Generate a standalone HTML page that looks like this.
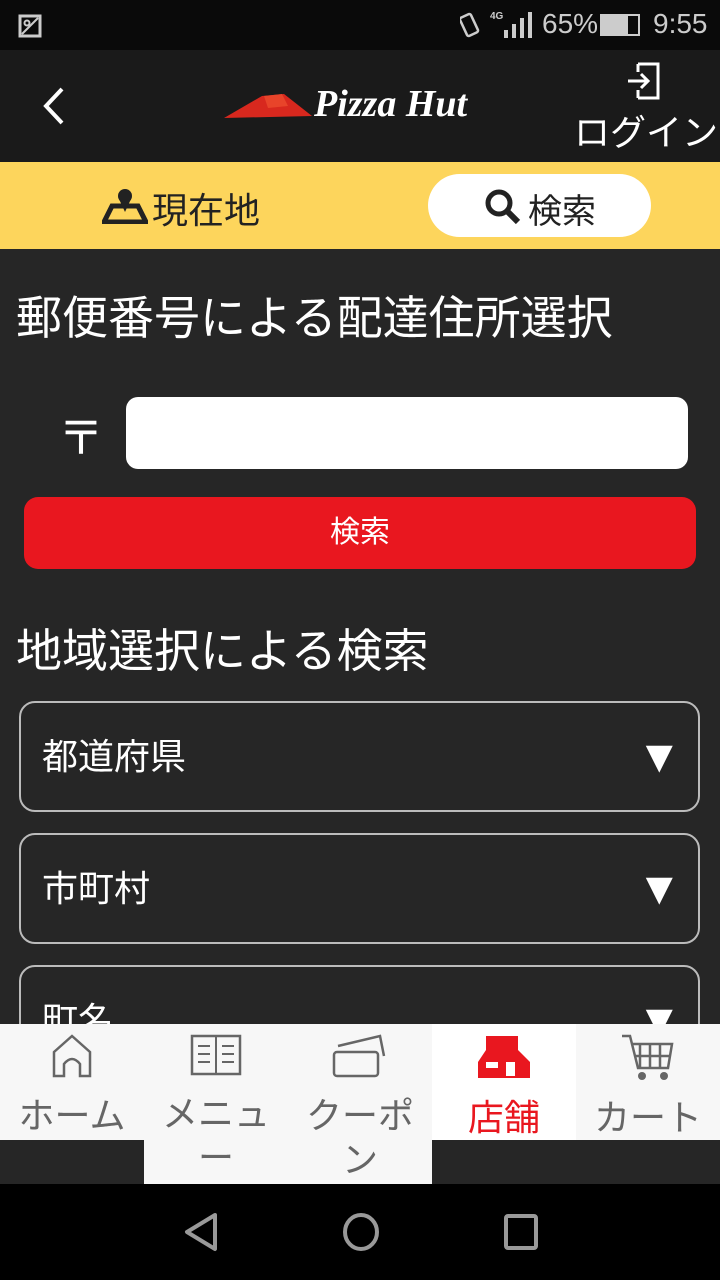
<!DOCTYPE html>
<html><head><meta charset="utf-8"><style>
*{margin:0;padding:0;box-sizing:border-box}
body{width:720px;height:1280px;background:#262626;position:relative;overflow:hidden;font-family:"Liberation Sans","Noto Sans CJK JP",sans-serif;color:#fff}
.abs{position:absolute}
.sel{position:absolute;left:19px;width:681px;height:111px;border:2px solid #bbb;border-radius:16px;font-size:36px;padding-left:21px;line-height:107px}
.sel span{position:absolute;right:16px;top:0;font-size:46px}
.tab{position:absolute;top:1024px;width:144px;padding:0 16px;background:#f7f7f7;color:#666;text-align:center;font-size:36px;line-height:44px;word-break:break-all}
.tab svg{display:block;margin:10px auto 16px}
</style></head><body>
<div class="abs" style="top:0;left:0;width:720px;height:50px;background:#0a0a0a"></div>
<svg class="abs" style="left:18px;top:14px" width="24" height="24"><rect x="2" y="2" width="20" height="20" fill="none" stroke="#ccc" stroke-width="3"/><path d="M4 20L20 4" stroke="#ccc" stroke-width="2"/><circle cx="9" cy="9" r="2.5" fill="none" stroke="#ccc" stroke-width="2"/></svg>
<svg class="abs" style="left:460px;top:10px" width="80" height="30"><rect x="3" y="5" width="12" height="20" rx="2" transform="rotate(-25 9 15)" fill="none" stroke="#ccc" stroke-width="2.5"/><text x="30" y="9" font-size="10" fill="#ccc" font-family="Liberation Sans" font-weight="bold">4G</text><rect x="44" y="20" width="4" height="8" fill="#ccc"/><rect x="52" y="14" width="4" height="14" fill="#ccc"/><rect x="60" y="8" width="4" height="20" fill="#ccc"/><rect x="68" y="2" width="4" height="26" fill="#ccc"/></svg>
<div class="abs" style="left:542px;top:8px;font-size:28px;color:#ccc">65%</div>
<div class="abs" style="left:600px;top:14px;width:40px;height:22px;border:2px solid #ccc"><div style="width:26px;height:100%;background:#ccc"></div></div>
<div class="abs" style="left:653px;top:8px;font-size:28px;color:#ccc">9:55</div>
<div class="abs" style="top:50px;left:0;width:720px;height:112px;background:#1a1a1a"></div>
<svg class="abs" style="left:40px;top:86px" width="30" height="40"><path d="M22 3L6 20L22 37" fill="none" stroke="#fff" stroke-width="4"/></svg>
<svg class="abs" style="left:222px;top:90px" width="95" height="30"><path d="M2 28L40 6L62 4L90 26Z" fill="#d8281e"/><path d="M42 6L60 4L66 16L46 18Z" fill="#e8442a"/></svg>
<div class="abs" style="left:314px;top:82px;font-size:38px;font-style:italic;font-weight:bold;font-family:'Liberation Serif',serif">Pizza Hut</div>
<svg class="abs" style="left:626px;top:62px" width="36" height="38"><path d="M12 2H32V36H12M12 10V2M12 28V36" fill="none" stroke="#fff" stroke-width="3"/><path d="M2 19H22M15 12L22 19L15 26" fill="none" stroke="#fff" stroke-width="3"/></svg>
<div class="abs" style="left:574px;top:104px;font-size:36px">ログイン</div>
<div class="abs" style="top:162px;left:0;width:720px;height:87px;background:#fdd55c"></div>
<svg class="abs" style="left:102px;top:186px" width="46" height="38"><path d="M2 36L10 20H36L44 36Z" fill="none" stroke="#222" stroke-width="5"/><circle cx="23" cy="10" r="7" fill="#222"/><path d="M17 13L23 26L29 13" fill="#222"/></svg>
<div class="abs" style="left:152px;top:182px;font-size:36px;color:#222">現在地</div>
<div class="abs" style="left:428px;top:174px;width:223px;height:63px;background:#fff;border-radius:32px"></div>
<svg class="abs" style="left:484px;top:188px" width="38" height="38"><circle cx="15" cy="15" r="11" fill="none" stroke="#222" stroke-width="5"/><path d="M23 23L34 34" stroke="#222" stroke-width="6"/></svg>
<div class="abs" style="left:528px;top:184px;font-size:34px;color:#222">検索</div>
<div class="abs" style="left:16px;top:282px;font-size:46px">郵便番号による配達住所選択</div>
<div class="abs" style="left:58px;top:402px;font-size:46px">〒</div>
<div class="abs" style="left:126px;top:397px;width:562px;height:72px;background:#fff;border-radius:12px"></div>
<div class="abs" style="left:24px;top:497px;width:672px;height:72px;background:#e9171f;border-radius:14px;text-align:center;line-height:72px;font-size:30px">検索</div>
<div class="abs" style="left:16px;top:615px;font-size:46px">地域選択による検索</div>
<div class="sel" style="top:701px">都道府県<span>▼</span></div>
<div class="sel" style="top:833px">市町村<span>▼</span></div>
<div class="sel" style="top:965px">町名<span>▼</span></div>
<div class="tab" style="left:0;height:116px;padding:0"><svg width="44" height="44"><path d="M4 42V18L22 2L40 18V42H30V30Q22 20 14 30V42Z" fill="none" stroke="#666" stroke-width="2.5"/></svg>ホーム</div>
<div class="tab" style="left:144px;height:160px"><svg width="52" height="42"><rect x="2" y="2" width="48" height="38" fill="none" stroke="#666" stroke-width="2.5"/><path d="M26 2V40M8 12H20M8 20H20M8 28H20M32 12H44M32 20H44M32 28H44" stroke="#666" stroke-width="2"/></svg>メニュー</div>
<div class="tab" style="left:288px;height:160px"><svg width="56" height="44"><rect x="2" y="18" width="44" height="24" rx="3" fill="none" stroke="#666" stroke-width="2.5"/><path d="M6 12L48 2L52 22" fill="none" stroke="#666" stroke-width="2.5"/></svg>クーポン</div>
<div class="tab" style="left:432px;height:116px;background:#fff;color:#e9171f"><svg width="56" height="46"><path d="M10 2H42V16L54 28V44H2V28L10 16Z" fill="#e9171f"/><rect x="10" y="28" width="12" height="6" fill="#fff"/><rect x="30" y="28" width="9" height="14" fill="#fff"/></svg>店舗</div>
<div class="tab" style="left:576px;height:116px;padding:0"><svg width="56" height="46"><path d="M2 2H10L18 34H48L52 10H12M20 10V34M30 10V34M40 10V34M14 22H50" fill="none" stroke="#666" stroke-width="2.5"/><circle cx="22" cy="42" r="4" fill="#666"/><circle cx="44" cy="42" r="4" fill="#666"/></svg>カート</div>
<div class="abs" style="top:1184px;left:0;width:720px;height:96px;background:#000"></div>
<svg class="abs" style="left:184px;top:1212px" width="36" height="40"><path d="M31 3L3 20L31 37Z" fill="none" stroke="#999" stroke-width="4" stroke-linejoin="round"/></svg>
<svg class="abs" style="left:342px;top:1212px" width="38" height="40"><ellipse cx="19" cy="20" rx="16" ry="17" fill="none" stroke="#999" stroke-width="4"/></svg>
<svg class="abs" style="left:504px;top:1214px" width="34" height="36"><rect x="2" y="2" width="30" height="32" rx="2" fill="none" stroke="#999" stroke-width="4"/></svg>
</body></html>
